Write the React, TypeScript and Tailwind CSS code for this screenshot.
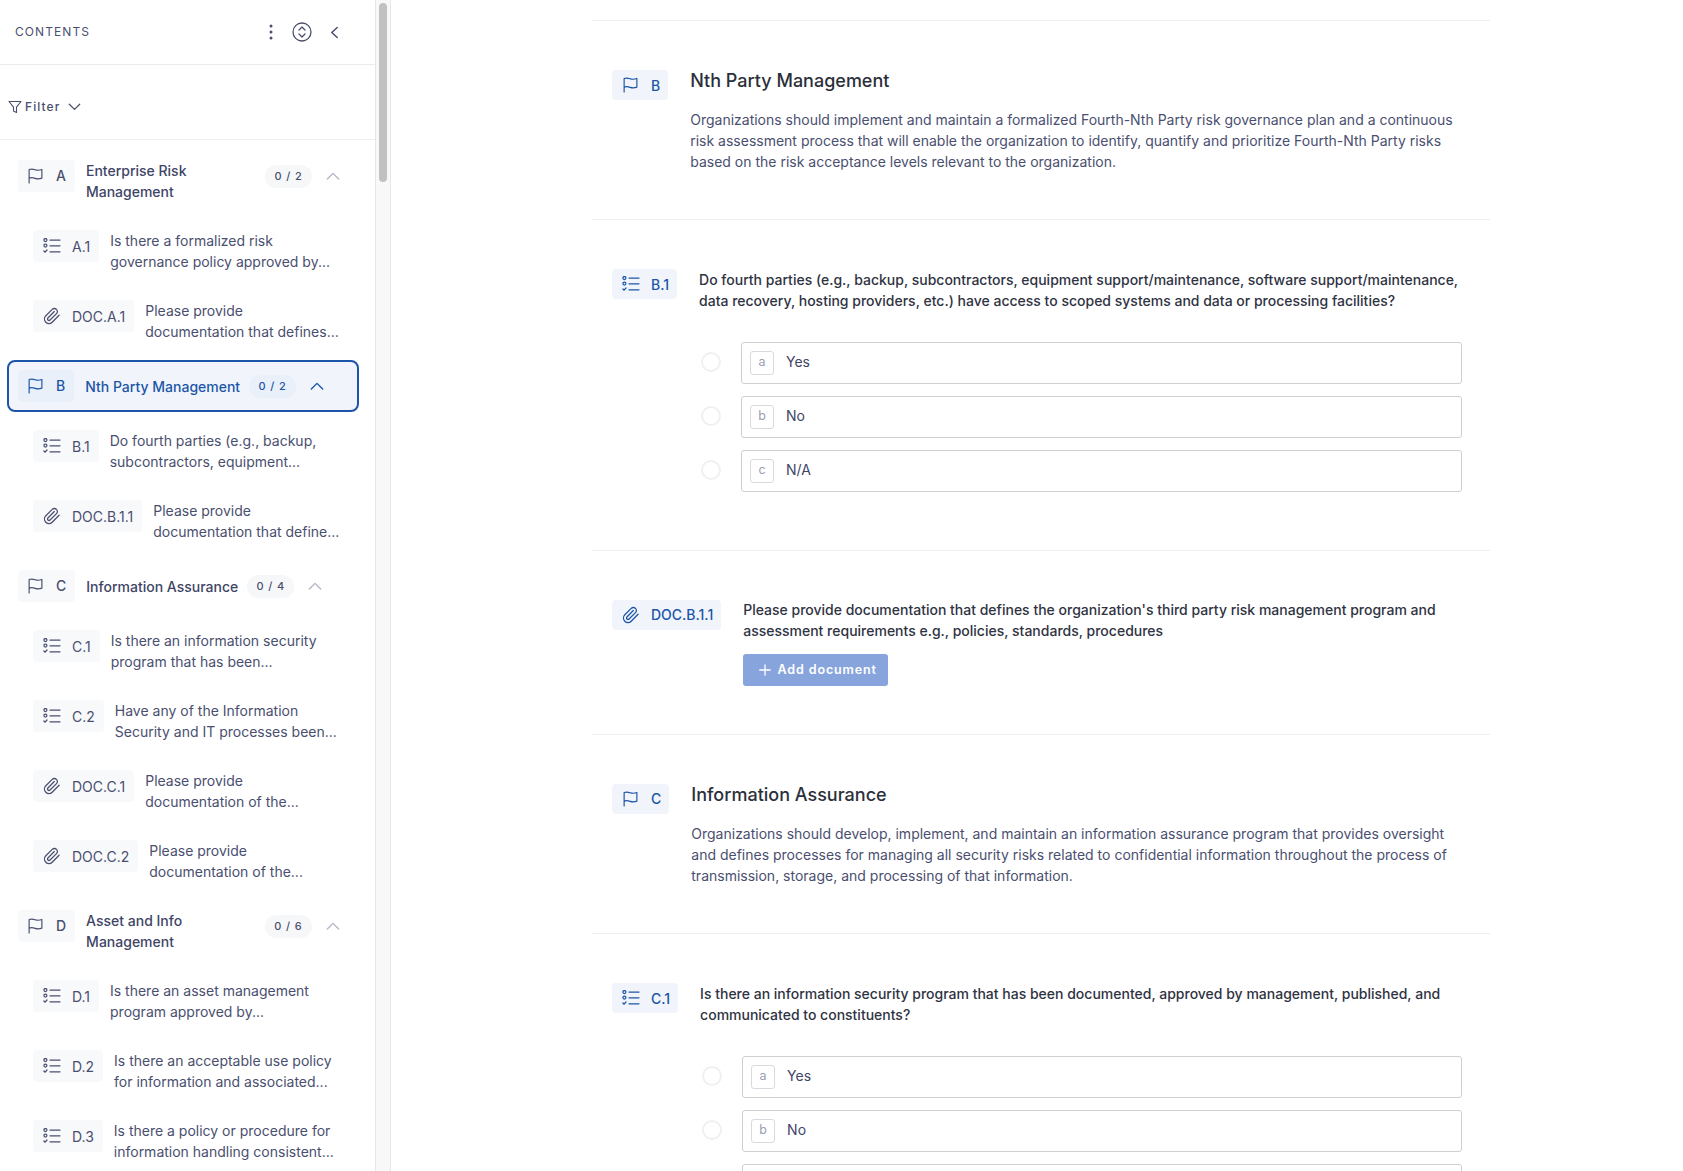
import React from "react";

const Flag = ({ className = "" }: { className?: string }) => (
  <svg viewBox="0 0 16 17" fill="none" stroke="currentColor" strokeWidth="1.25" strokeLinejoin="round" strokeLinecap="round" className={className}>
    <path d="M1.2 16V1.6C3 .9 5 .9 7.6 1.8C10 2.6 12.4 2.5 14.8 1.5V10.8C12.4 11.7 10 11.8 7.6 11C5 10.1 3 10.1 1.2 10.8" />
  </svg>
);

const ListIcon = ({ className = "" }: { className?: string }) => (
  <svg viewBox="0 0 18 16" fill="none" stroke="currentColor" strokeWidth="1.25" strokeLinecap="round" strokeLinejoin="round" className={className}>
    <circle cx="2.4" cy="2" r="1.5" />
    <circle cx="2.4" cy="7.6" r="1.5" />
    <path d="M.9 13l1.2 1.2L4 12" />
    <path d="M7 2h10M7 7.8h10M7 13.8h10" />
  </svg>
);

const Clip = ({ className = "" }: { className?: string }) => (
  <svg viewBox="0 0 24 24" fill="none" stroke="currentColor" strokeWidth="1.7" strokeLinecap="round" strokeLinejoin="round" className={className}>
    <path d="M21.44 11.05l-9.19 9.19a6 6 0 0 1-8.49-8.49l8.57-8.57A4 4 0 1 1 18 8.84l-8.59 8.57a2 2 0 0 1-2.83-2.83l8.49-8.48" />
  </svg>
);

const Chev = ({ className = "", up = true }: { className?: string; up?: boolean }) => (
  <svg viewBox="0 0 16 10" fill="none" stroke="currentColor" strokeWidth="1.6" strokeLinecap="round" strokeLinejoin="round" className={className}>
    <path d={up ? "M1.5 8.5L8 2l6.5 6.5" : "M1.5 1.5L8 8l6.5-6.5"} />
  </svg>
);

type Item = { kind: "q" | "d"; id: string; l1: string; l2: string };
type Sec = { letter: string; title: string; count: string; active?: boolean; items: Item[] };

const sections: Sec[] = [
  {
    letter: "A", title: "Enterprise Risk Management", count: "0 / 2",
    items: [
      { kind: "q", id: "A.1", l1: "Is there a formalized risk", l2: "governance policy approved by..." },
      { kind: "d", id: "DOC.A.1", l1: "Please provide", l2: "documentation that defines..." },
    ],
  },
  {
    letter: "B", title: "Nth Party Management", count: "0 / 2", active: true,
    items: [
      { kind: "q", id: "B.1", l1: "Do fourth parties (e.g., backup,", l2: "subcontractors, equipment..." },
      { kind: "d", id: "DOC.B.1.1", l1: "Please provide", l2: "documentation that define..." },
    ],
  },
  {
    letter: "C", title: "Information Assurance", count: "0 / 4",
    items: [
      { kind: "q", id: "C.1", l1: "Is there an information security", l2: "program that has been..." },
      { kind: "q", id: "C.2", l1: "Have any of the Information", l2: "Security and IT processes been..." },
      { kind: "d", id: "DOC.C.1", l1: "Please provide", l2: "documentation of the..." },
      { kind: "d", id: "DOC.C.2", l1: "Please provide", l2: "documentation of the..." },
    ],
  },
  {
    letter: "D", title: "Asset and Info Management", count: "0 / 6",
    items: [
      { kind: "q", id: "D.1", l1: "Is there an asset management", l2: "program approved by..." },
      { kind: "q", id: "D.2", l1: "Is there an acceptable use policy", l2: "for information and associated..." },
      { kind: "q", id: "D.3", l1: "Is there a policy or procedure for", l2: "information handling consistent..." },
    ],
  },
];

function SectionRow({ s }: { s: Sec }) {
  const a = !!s.active;
  const Inner = (
    <div className="flex items-start w-[322px]">
      <div className={`h-8 shrink-0 rounded flex items-center pl-[10px] pr-[9px] gap-[13px] text-[14px] font-medium ${a ? "bg-[#e9f0f9] text-[#1c55a8]" : "bg-[#f8f9fb] text-[#4a4f6f]"}`}>
        <Flag className="w-[15px] h-[16px]" />
        <span className="leading-none">{s.letter}</span>
      </div>
      <div className={`ml-[11px] min-h-8 flex items-center text-[14px] leading-[21px] font-medium ${a ? "text-[#1c55a8]" : "text-[#3f4566]"}`}>
        <span>{s.title}</span>
      </div>
      <div className="h-8 shrink-0 flex items-center ml-[9px]">
        <span className={`h-[23px] w-[47px] rounded-full flex items-center justify-center text-[11px] font-medium tracking-[0.08em] pt-[1px] ${a ? "bg-[#e9f0f9] text-[#1c55a8]" : "bg-[#f6f7f8] text-[#4a4f6f]"}`}>{s.count}</span>
        <Chev className={`w-[14px] h-[10px] ml-[14px] ${a ? "text-[#1c55a8]" : "text-[#b4b7c4]"}`} />
      </div>
    </div>
  );
  if (a) {
    return (
      <div className="-my-[10px] -mx-[11px] h-[52px] w-[352px] rounded-[8px] border-2 border-[#1c55a8] bg-[#f1f5fb] flex items-center pl-[9px]">
        {Inner}
      </div>
    );
  }
  return Inner;
}

function ItemRow({ it }: { it: Item }) {
  return (
    <div className="flex items-start pl-[15px]">
      <div className="h-8 shrink-0 rounded bg-[#f8f9fb] flex items-center pl-[10px] pr-[9px] gap-[11px] text-[14px] text-[#4a4f6f]">
        {it.kind === "q" ? <ListIcon className="w-[18px] h-[16px]" /> : <Clip className="w-[18px] h-[18px]" />}
        <span>{it.id}</span>
      </div>
      <div className="ml-[11px] text-[14px] leading-[21px] text-[#4a4f6f]">
        <div className="whitespace-nowrap">{it.l1}</div>
        <div className="whitespace-nowrap">{it.l2}</div>
      </div>
    </div>
  );
}

function Sidebar() {
  return (
    <aside className="w-[391px] h-full shrink-0 flex border-r border-[#e8e8e8] overflow-hidden">
      <div className="w-[376px] shrink-0 border-r border-[#e6e6e6] h-full overflow-hidden">
        <div className="h-[65px] border-b border-[#ebebeb] flex items-center pl-[15px] pr-[36px]">
          <span className="text-[12px] tracking-[0.09em] text-[#4a4f6f] flex-1">CONTENTS</span>
          <svg viewBox="0 0 4 16" className="w-[4px] h-[16px] text-[#4a4f6f]" fill="currentColor">
            <circle cx="2" cy="2" r="1.5" /><circle cx="2" cy="8" r="1.5" /><circle cx="2" cy="14" r="1.5" />
          </svg>
          <svg viewBox="0 0 20 20" fill="none" stroke="currentColor" strokeWidth="1.3" strokeLinecap="round" strokeLinejoin="round" className="w-[20px] h-[20px] ml-[19px] text-[#4a4f6f]">
            <circle cx="10" cy="10" r="9" />
            <path d="M7 8l3-3l3 3M7 12l3 3l3-3" />
          </svg>
          <svg viewBox="0 0 10 14" fill="none" stroke="currentColor" strokeWidth="1.7" strokeLinecap="round" strokeLinejoin="round" className="w-[9px] h-[13px] ml-[18px] text-[#4a4f6f]">
            <path d="M8 1.5L2 7l6 5.5" />
          </svg>
        </div>
        <div className="h-[75px] border-b border-[#efefef] flex items-center pl-[8px] pt-[10px]">
          <svg viewBox="0 0 14 14" fill="none" stroke="currentColor" strokeWidth="1.1" strokeLinejoin="round" className="w-[14px] h-[14px] text-[#4a4f6f]">
            <path d="M1 1.5h12L8.5 7.2v5.3l-3-1.6V7.2z" />
          </svg>
          <span className="ml-[3px] text-[12px] font-medium tracking-[0.09em] text-[#4a4f6f]">Filter</span>
          <Chev up={false} className="w-[13px] h-[8px] ml-[8px] text-[#4a4f6f]" />
        </div>
        <div className="pt-[20px] pl-[18px] flex flex-col gap-[28px]">
          {sections.map((s) => (
            <React.Fragment key={s.letter}>
              <SectionRow s={s} />
              {s.items.map((it) => <ItemRow key={it.id} it={it} />)}
            </React.Fragment>
          ))}
        </div>
      </div>
      <div className="flex-1 bg-[#f8f8f8] pt-[3px] pl-[3px]">
        <div className="w-[8px] h-[179px] rounded-full bg-[#c1c1c1]" />
      </div>
    </aside>
  );
}

function Tag({ icon, label }: { icon: "flag" | "list" | "clip"; label: string }) {
  return (
    <div className={`h-[30px] shrink-0 rounded bg-[#f1f5fb] flex items-center font-medium text-[14px] text-[#1c55a8] ${icon === "flag" ? "pl-[11px] pr-[8px] gap-[13px]" : "pl-[10px] pr-[8px] gap-[11px]"}`}>
      {icon === "flag" && <Flag className="w-[15px] h-[16px]" />}
      {icon === "list" && <ListIcon className="w-[18px] h-[16px]" />}
      {icon === "clip" && <Clip className="w-[18px] h-[18px]" />}
      <span>{label}</span>
    </div>
  );
}

function Option({ k, v }: { k: string; v: string }) {
  return (
    <div className="flex items-center gap-[20px]">
      <div className="w-[20px] h-[20px] rounded-full border-2 border-[#f0f0f0] shrink-0 -translate-y-[1px]" />
      <div className="flex-1 h-[41.5px] rounded-[3px] border border-[#cfcfd2] flex items-center pl-[8px] bg-white">
        <span className="w-[24px] h-[24px] rounded-[3px] border border-[#d9dae0] flex items-center justify-center text-[12.5px] text-[#9a9db2]">{k}</span>
        <span className="ml-[12px] text-[14px] text-[#3f4566] relative -top-[1px]">{v}</span>
      </div>
    </div>
  );
}

function Block({ children, last }: { children: React.ReactNode; last?: boolean }) {
  return (
    <section className={`pt-[49px] flex gap-[22px] pl-[20px] pr-[28px] ${last ? "" : "border-b border-[#efefef]"}`}>
      {children}
    </section>
  );
}

function Options() {
  return (
    <div className="mt-[31px] mb-[58px] ml-[2px] flex flex-col gap-[12.5px]">
      <Option k="a" v="Yes" />
      <Option k="b" v="No" />
      <Option k="c" v="N/A" />
    </div>
  );
}

function Main() {
  return (
    <main className="flex-1 h-full overflow-hidden pl-[201px] pr-[193px] pt-[20px]">
      <div className="border-t border-[#efefef]">
        <Block>
          <Tag icon="flag" label="B" />
          <div className="flex-1 pb-[47px]">
            <h2 className="text-[18px] font-medium leading-[24px] -mt-[1px] text-[#2b2f3a]">Nth Party Management</h2>
            <p className="mt-[16px] text-[14px] leading-[21px] text-[#4a4f6f]">
              Organizations should implement and maintain a formalized Fourth-Nth Party risk governance plan and a continuous<br />
              risk assessment process that will enable the organization to identify, quantify and prioritize Fourth-Nth Party risks<br />
              based on the risk acceptance levels relevant to the organization.
            </p>
          </div>
        </Block>
        <Block>
          <Tag icon="list" label="B.1" />
          <div className="flex-1">
            <p className="text-[14px] leading-[21px] font-medium text-[#2f3342]">
              Do fourth parties (e.g., backup, subcontractors, equipment support/maintenance, software support/maintenance,<br />
              data recovery, hosting providers, etc.) have access to scoped systems and data or processing facilities?
            </p>
            <Options />
          </div>
        </Block>
        <Block>
          <Tag icon="clip" label="DOC.B.1.1" />
          <div className="flex-1 pb-[48px] -mt-[1px]">
            <p className="text-[14px] leading-[21px] font-medium text-[#2f3342]">
              Please provide documentation that defines the organization's third party risk management program and<br />
              assessment requirements e.g., policies, standards, procedures
            </p>
            <button className="mt-[13px] h-[32px] w-[145px] rounded-[3px] bg-[#87a5dc] flex items-center justify-center gap-[7px] pl-[4px] text-white text-[12.5px] font-semibold tracking-[0.07em]">
              <svg viewBox="0 0 12 12" fill="none" stroke="currentColor" strokeWidth="1.3" strokeLinecap="round" className="w-[12px] h-[12px]"><path d="M6 .8v10.4M.8 6h10.4" /></svg>
              <span className="pt-[1px]">Add document</span>
            </button>
          </div>
        </Block>
        <Block>
          <Tag icon="flag" label="C" />
          <div className="flex-1 pb-[47.5px]">
            <h2 className="text-[18px] font-medium leading-[24px] -mt-[1px] text-[#2b2f3a]">Information Assurance</h2>
            <p className="mt-[16px] text-[14px] leading-[21px] text-[#4a4f6f]">
              Organizations should develop, implement, and maintain an information assurance program that provides oversight<br />
              and defines processes for managing all security risks related to confidential information throughout the process of<br />
              transmission, storage, and processing of that information.
            </p>
          </div>
        </Block>
        <Block last>
          <Tag icon="list" label="C.1" />
          <div className="flex-1">
            <p className="text-[14px] leading-[21px] font-medium text-[#2f3342]">
              Is there an information security program that has been documented, approved by management, published, and<br />
              communicated to constituents?
            </p>
            <Options />
          </div>
        </Block>
      </div>
    </main>
  );
}

export default function App() {
  return (
    <div className="w-full h-screen flex overflow-hidden bg-white font-['Inter',sans-serif]">
      <Sidebar />
      <Main />
    </div>
  );
}
